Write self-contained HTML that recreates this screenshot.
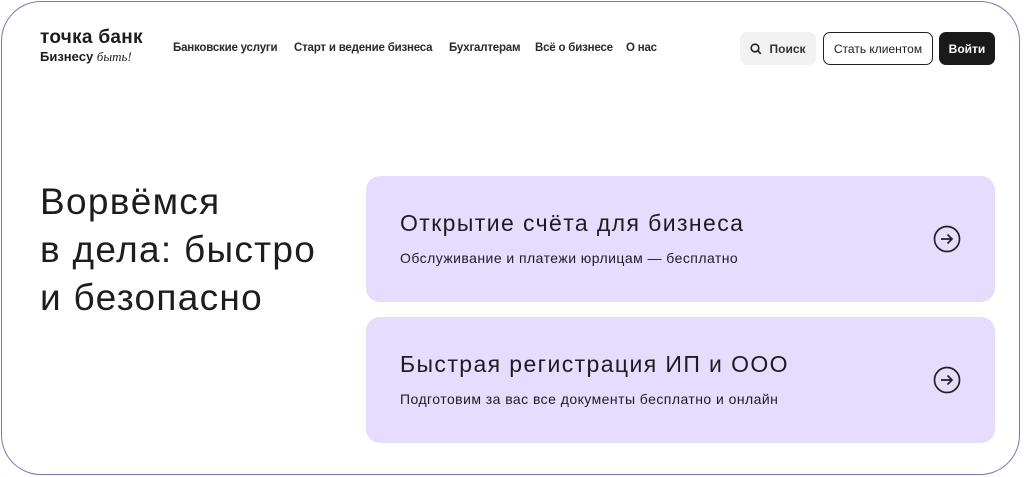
<!DOCTYPE html>
<html><head><meta charset="utf-8"><style>
*{margin:0;padding:0;box-sizing:border-box}
body{width:1024px;height:477px;background:#fff;font-family:"Liberation Sans",sans-serif;color:#1d1d1f;position:relative;overflow:hidden}
.frame{position:absolute;left:1px;top:1px;width:1019px;height:474px;border:1.5px solid #7a70dc;border-radius:40px}
.logo1{position:absolute;left:40px;top:27px;font-size:19px;font-weight:bold;letter-spacing:0.3px}
.logo2{position:absolute;left:40px;top:49px;font-size:13px;font-weight:bold}
.logo2 i{font-family:"Liberation Serif",serif;font-weight:normal}
.nav{position:absolute;top:42px;font-size:11.5px;font-weight:bold;color:#2a2a2a;letter-spacing:-0.2px}
.btn{position:absolute;top:32px;height:33px;border-radius:7px;font-size:12px;display:flex;align-items:center;justify-content:center}
.h1{position:absolute;left:40px;top:178px;font-size:37px;line-height:48px;letter-spacing:1.3px}
.card{position:absolute;left:366px;width:629px;height:126px;background:#e6dcfd;border-radius:14px}
.card .t{position:absolute;left:34px;top:34px;font-size:23px;letter-spacing:1.4px}
.card .s{position:absolute;left:34px;top:74px;font-size:14px;letter-spacing:0.45px}
.card svg{position:absolute;left:567px;top:49px}
</style></head><body>
<div class="frame"></div>
<div class="logo1">точка банк</div>
<div class="logo2">Бизнесу <i>быть!</i></div>
<div class="nav" style="left:173px">Банковские услуги</div>
<div class="nav" style="left:294px">Старт и ведение бизнеса</div>
<div class="nav" style="left:449px">Бухгалтерам</div>
<div class="nav" style="left:535px">Всё о бизнесе</div>
<div class="nav" style="left:626px">О нас</div>
<div class="btn" style="left:740px;width:76px;background:#f2f2f2;font-weight:bold;color:#333"><svg width="12" height="12" viewBox="0 0 12 12" style="margin-right:7px"><circle cx="5" cy="5" r="3.8" fill="none" stroke="#222" stroke-width="1.6"/><path d="M8 8l2.8 2.8" stroke="#222" stroke-width="1.6"/></svg>Поиск</div>
<div class="btn" style="left:823px;width:110px;border:1.5px solid #222">Стать клиентом</div>
<div class="btn" style="left:939px;width:56px;background:#1a1a1a;color:#fff;font-weight:bold">Войти</div>
<div class="h1">Ворвёмся<br>в дела: быстро<br>и безопасно</div>
<div class="card" style="top:176px"><div class="t">Открытие счёта для бизнеса</div><div class="s">Обслуживание и платежи юрлицам — бесплатно</div>
<svg width="28" height="28" viewBox="0 0 28 28"><circle cx="14" cy="14" r="12.5" fill="none" stroke="#222" stroke-width="1.7"/><path d="M8 14h11M14.5 9.5L19 14l-4.5 4.5" fill="none" stroke="#222" stroke-width="1.7"/></svg></div>
<div class="card" style="top:317px"><div class="t">Быстрая регистрация ИП и ООО</div><div class="s">Подготовим за вас все документы бесплатно и онлайн</div>
<svg width="28" height="28" viewBox="0 0 28 28"><circle cx="14" cy="14" r="12.5" fill="none" stroke="#222" stroke-width="1.7"/><path d="M8 14h11M14.5 9.5L19 14l-4.5 4.5" fill="none" stroke="#222" stroke-width="1.7"/></svg></div>
</body></html>
